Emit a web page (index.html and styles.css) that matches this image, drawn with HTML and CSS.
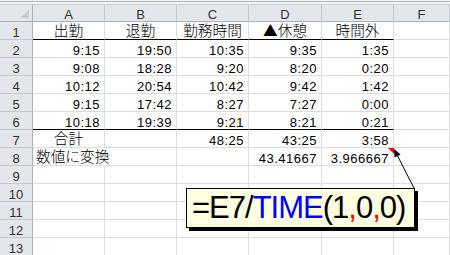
FILE: index.html
```html
<!DOCTYPE html>
<html lang="ja">
<head>
<meta charset="utf-8">
<link rel="stylesheet" href="styles.css">
</head>
<body>
<div class="topbar"></div>
<div class="sheet">
  <div class="corner"></div><div class="ch">A</div><div class="ch">B</div><div class="ch">C</div><div class="ch">D</div><div class="ch">E</div><div class="ch">F</div>

  <div class="rh">1</div><div class="c jp bb">出勤</div><div class="c jp bb">退勤</div><div class="c jp bb">勤務時間</div><div class="c jp bb">▲休憩</div><div class="c jp bb">時間外</div><div class="c"></div>

  <div class="rh">2</div><div class="c">9:15</div><div class="c">19:50</div><div class="c">10:35</div><div class="c">9:35</div><div class="c">1:35</div><div class="c"></div>
  <div class="rh">3</div><div class="c">9:08</div><div class="c">18:28</div><div class="c">9:20</div><div class="c">8:20</div><div class="c">0:20</div><div class="c"></div>
  <div class="rh">4</div><div class="c">10:12</div><div class="c">20:54</div><div class="c">10:42</div><div class="c">9:42</div><div class="c">1:42</div><div class="c"></div>
  <div class="rh">5</div><div class="c">9:15</div><div class="c">17:42</div><div class="c">8:27</div><div class="c">7:27</div><div class="c">0:00</div><div class="c"></div>
  <div class="rh">6</div><div class="c bb">10:18</div><div class="c bb">19:39</div><div class="c bb">9:21</div><div class="c bb">8:21</div><div class="c bb">0:21</div><div class="c"></div>

  <div class="rh">7</div><div class="c jp">合計</div><div class="c"></div><div class="c">48:25</div><div class="c">43:25</div><div class="c">3:58</div><div class="c"></div>
  <div class="rh">8</div><div class="c jp left nr">数値に変換</div><div class="c"></div><div class="c"></div><div class="c">43.41667</div><div class="c">3.966667</div><div class="c"></div>

  <div class="rh">9</div><div class="c"></div><div class="c"></div><div class="c"></div><div class="c"></div><div class="c"></div><div class="c"></div>
  <div class="rh">10</div><div class="c"></div><div class="c"></div><div class="c"></div><div class="c"></div><div class="c"></div><div class="c"></div>
  <div class="rh">11</div><div class="c"></div><div class="c"></div><div class="c"></div><div class="c"></div><div class="c"></div><div class="c"></div>
  <div class="rh">12</div><div class="c"></div><div class="c"></div><div class="c"></div><div class="c"></div><div class="c"></div><div class="c"></div>
  <div class="rh">13</div><div class="c"></div><div class="c"></div><div class="c"></div><div class="c"></div><div class="c"></div><div class="c"></div>
</div>

<div class="callout">=E7/<span class="fn">TIME</span>(1<span class="sep">,</span>0<span class="sep">,</span>0)</div>

<svg class="overlay" width="450" height="255" viewBox="0 0 450 255">
  <polygon points="388,148 394,148 394,154" fill="#ff0000"/>
  <line x1="414.5" y1="189" x2="397.6" y2="156" stroke="#000" stroke-width="1"/>
  <polygon points="394,149 400.6,154.6 394.6,157.6" fill="#000"/>
</svg>
</body>
</html>
```

FILE: styles.css
```css
html, body {
  margin: 0;
  padding: 0;
}

body {
  width: 450px;
  height: 255px;
  overflow: hidden;
  background: #ffffff;
  position: relative;
  font-family: "Liberation Sans", Arial, sans-serif;
  color: #000;
}

.topbar {
  height: 5px;
  background: linear-gradient(#f2f3f5 0 1px, #b3b9c1 1px 2px, #f4f5f7 2px 4px, #c8cdd3 4px 5px);
}

.sheet {
  display: grid;
  grid-template-columns: 33px 72px 72px 72px 73px 72px 1fr;
  grid-template-rows: 17px repeat(13, 18px);
}

.sheet > div {
  box-sizing: border-box;
  white-space: nowrap;
  overflow: visible;
}

.corner {
  background-color: #e3e6ea;
  background-image: linear-gradient(to bottom right, transparent 50%, #c6cbd1 50%);
  background-size: 9px 9px;
  background-repeat: no-repeat;
  background-position: right 3px bottom 3px;
  border-right: 1px solid #a9b0b8;
  border-bottom: 1px solid #a9b0b8;
}

.ch {
  background: #e3e6ea;
  border-right: 1px solid #c3c8ce;
  border-bottom: 1px solid #a9b0b8;
  text-align: center;
  font-size: 13px;
  line-height: 15px;
  padding-top: 2px;
  color: #333;
}

.rh {
  background: #e3e6ea;
  border-right: 1px solid #a9b0b8;
  border-bottom: 1px solid #c3c8ce;
  text-align: center;
  font-size: 13px;
  line-height: 18px;
  padding-top: 2px;
  color: #333;
}

.c {
  border-right: 1px solid #dadcdd;
  border-bottom: 1px solid #dadcdd;
  font-size: 13px;
  letter-spacing: 0.5px;
  line-height: 18px;
  padding: 2px 4px 0 0;
  text-align: right;
  position: relative;
}

.jp {
  font-family: "Noto Sans CJK JP", "Liberation Sans", sans-serif;
  font-size: 11pt;
  font-weight: 300;
  letter-spacing: 0;
  line-height: 16px;
  padding: 0;
  text-align: center;
}

.left {
  text-align: left;
  padding-left: 3px;
  z-index: 1;
}

.nr {
  border-right-color: transparent;
}

.bb {
  border-bottom-color: #000;
}

.callout {
  position: absolute;
  left: 186px;
  top: 188px;
  width: 229px;
  height: 40px;
  box-sizing: border-box;
  border: 1px solid #000;
  background: #ffffe1;
  box-shadow: 3px 3px 0 #000;
  font-family: "Liberation Sans", Arial, sans-serif;
  font-size: 31px;
  line-height: 37px;
  letter-spacing: -1px;
  padding-left: 5px;
  white-space: nowrap;
  color: #000;
}

.fn {
  color: #0000ff;
}

.sep {
  color: #ff0000;
}

.overlay {
  position: absolute;
  left: 0;
  top: 0;
  pointer-events: none;
}
```
